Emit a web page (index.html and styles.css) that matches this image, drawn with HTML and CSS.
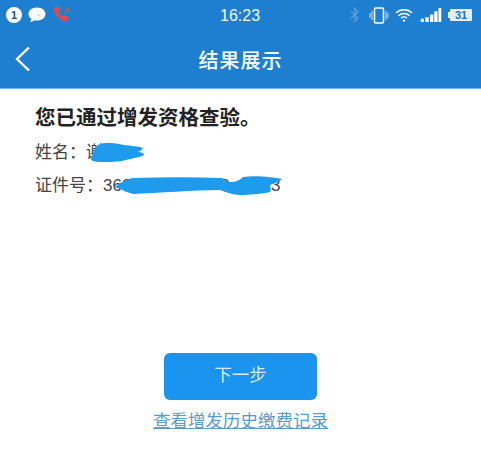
FILE: index.html
```html
<!DOCTYPE html>
<html lang="zh">
<head>
<meta charset="utf-8">
<title>结果展示</title>
<link rel="stylesheet" href="styles.css">
</head>
<body>
<header class="header">
  <div class="status">
    <div class="status-left">
      <span class="badge">1</span>
      <svg class="ic-msg" viewBox="0 0 18 16"><path d="M9 0.5C4.2 0.5 0.5 3.3 0.5 7c0 2 1.1 3.8 2.9 5 -.2 1.2-.9 2.3-1.6 3 1.8-.1 3.5-.8 4.6-1.7.8.2 1.7.3 2.6.3 4.8 0 8.500-2.900 8.500-6.600S13.800.5 9 .5z" fill="#fff"/><path d="M9 8h3" stroke="#f5c77a" stroke-width="1.200"/></svg>
      <svg class="ic-call" viewBox="0 0 18 18"><path d="M2.500 1 5.500.5l1.500 4-1.500 1.500c.8 2 2.300 3.600 4.200 4.600l1.500-1.500 4 1.500-.5 3.700c-.2.800-1 1.200-1.800 1C6.500 14.500 2 9.500 1 3.600c-.1-.9.700-2.300 1.500-2.600z" fill="#e5484d"/><path d="M16 2.500 11.500 6.500" stroke="#e5484d" stroke-width="2" fill="none"/></svg>
    </div>
    <span class="time">16:23</span>
    <div class="status-right">
      <svg class="ic-bt" viewBox="0 0 10 16"><path d="M1 4.500 8 11 4.800 14.500V1.500L8 5 1 11.500" fill="none" stroke="#5b9edb" stroke-width="1.300"/></svg>
      <svg class="ic-vib" viewBox="0 0 20 17"><rect x="5.500" y="1" width="9" height="15" rx="1.200" fill="none" stroke="#fff" stroke-width="1.500"/><path d="M3 4v9M1 6v5M17 4v9M19 6v5" stroke="#cfe3f5" stroke-width="1" fill="none"/></svg>
      <svg class="ic-wifi" viewBox="0 0 18 14"><path d="M1 5a11.500 11.500 0 0 1 16 0M3.500 7.700a8 8 0 0 1 11 0M6 10.200a4.400 4.400 0 0 1 6 0" fill="none" stroke="#fff" stroke-width="1.500"/><circle cx="9" cy="12.600" r="1.200" fill="#fff"/></svg>
      <svg class="ic-signal" viewBox="0 0 22 15"><path d="M0 11.500h3.500V15H0zM5 10h3.500v5H5zM10 7h3.500v8H10zM14.500 3.500H18V15h-3.500zM19 0h3v15h-3z" fill="#fff"/></svg>
      <span class="battery">31</span>
    </div>
  </div>
  <div class="nav">
    <svg class="back" viewBox="0 0 18 28"><path d="M15 2.500 3 14l12 11.500" fill="none" stroke="#fff" stroke-width="2.400"/></svg>
    <h1 class="nav-title">结果展示</h1>
  </div>
</header>
<main class="content">
  <h2 class="result">您已通过增发资格查验。</h2>
  <p class="row">姓名：谢</p>
  <p class="row">证件号：360</p>
  <span class="peek peek-mid">8</span>
  <span class="peek peek-tail">3</span>
  <svg class="scribble scribble-name" viewBox="0 0 54 20"><path d="M0 16C2 9 4 3 9 1c8-2 16-1 24 1 7 1 14 1 19 3-1 2-3 3-5 4 3 0 6 1 6 3-3 2-10 3-18 5-7 2-18 2-24 2-5 0-10 0-11-3z" fill="#1f9bee"/></svg>
  <svg class="scribble scribble-id" viewBox="0 0 168 20"><path d="M0 11C4 7 12 3 18 2c30-1 60-1 89 0 5 5 14 6 21-1 12-2 30 0 39 2-3 3-8 5-12 6 1 3 1 5 0 7-8 2-20 3-30 3-7 0-14-3-20-5-26 0-62 3-87 4-6-2-10-3-10-4C5 13 2 12 0 11z" fill="#1f9bee"/></svg>
  <div class="actions">
    <button class="next" type="button">下一步</button>
    <a class="history" href="#">查看增发历史缴费记录</a>
  </div>
</main>
</body>
</html>
```
FILE: styles.css
```css
* { box-sizing: border-box; }
html, body { margin: 0; height: 100%; }
body {
  width: 481px;
  height: 463px;
  overflow: hidden;
  background: #fff;
  font-family: "Liberation Sans", "Noto Sans CJK SC", sans-serif;
  color: #333;
  display: flex;
  flex-direction: column;
}
.header {
  background: #1e7fd0;
  height: 89px;
  border-bottom: 1px solid #6db9ea;
  flex: none;
}
.status {
  height: 30px;
  position: relative;
  display: flex;
  align-items: center;
  justify-content: space-between;
  padding: 0 9px 0 6px;
}
.status-left, .status-right { display: flex; align-items: center; }
.badge {
  width: 16px;
  height: 16px;
  border-radius: 50%;
  background: #fff;
  color: #1c4d78;
  font-size: 11px;
  font-weight: bold;
  line-height: 16px;
  text-align: center;
}
.ic-msg { width: 18px; height: 16px; margin-left: 6px; }
.ic-call { width: 18px; height: 18px; margin-left: 7px; }
.time {
  position: absolute;
  left: 220px;
  top: 6px;
  font-size: 16px;
  line-height: 20px;
  color: #f2f7fb;
}
.ic-bt { width: 10px; height: 16px; }
.ic-vib { width: 20px; height: 17px; margin-left: 9px; }
.ic-wifi { width: 18px; height: 14px; margin-left: 6px; }
.ic-signal { width: 22px; height: 14px; margin-left: 7px; }
.battery {
  position: relative;
  width: 22px;
  height: 12px;
  margin-left: 8px;
  background: #e4eef6;
  color: #1e6fb5;
  font-size: 11px;
  font-weight: bold;
  line-height: 12px;
  text-align: center;
  border-radius: 1px;
}
.battery::before {
  content: "";
  position: absolute;
  left: -2px;
  top: 3px;
  width: 2px;
  height: 6px;
  background: #e4eef6;
}
.nav {
  height: 58px;
  position: relative;
  display: flex;
  align-items: center;
  justify-content: center;
}
.back {
  position: absolute;
  left: 14px;
  top: 15px;
  width: 18px;
  height: 28px;
}
.nav-title {
  margin: 0;
  font-size: 20px;
  font-weight: 500;
  color: #fff;
  letter-spacing: 1px;
}
.content {
  flex: 1;
  position: relative;
  padding: 16px 0 0 35px;
}
.result {
  margin: 0 0 10px;
  font-size: 20.5px;
  line-height: 26px;
  font-weight: bold;
  color: #222;
}
.row {
  margin: 0 0 10px;
  font-size: 17px;
  line-height: 23px;
  color: #444;
}
.peek {
  position: absolute;
  font-size: 17px;
  line-height: 23px;
  color: #444;
}
.peek-mid { left: 220px; top: 85px; }
.peek-tail { left: 271px; top: 85px; }
.scribble { position: absolute; }
.scribble-name { left: 91px; top: 54px; width: 54px; height: 20px; }
.scribble-id { left: 115px; top: 87px; width: 168px; height: 20px; }
.actions {
  position: absolute;
  left: 0;
  right: 0;
  top: 264px;
  display: flex;
  flex-direction: column;
  align-items: center;
}
.next {
  width: 153px;
  height: 47px;
  border: 0;
  border-radius: 6px;
  background: #1a94ef;
  color: #d5ecfb;
  font-family: inherit;
  font-size: 17.5px;
  padding: 0 0 6px;
}
.history {
  margin-top: 10px;
  font-size: 17.5px;
  line-height: 23px;
  color: #5a9bc9;
  text-decoration: underline;
}
```
